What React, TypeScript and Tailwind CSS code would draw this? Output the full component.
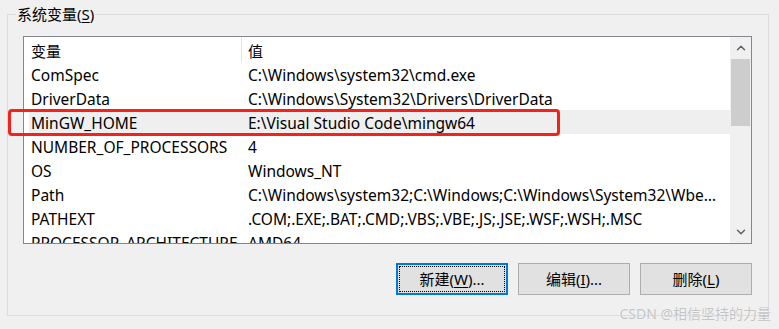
import { ChevronUp, ChevronDown } from "lucide-react"

const rows = [
  { name: "ComSpec", value: "C:\\Windows\\system32\\cmd.exe" },
  { name: "DriverData", value: "C:\\Windows\\System32\\Drivers\\DriverData" },
  { name: "MinGW_HOME", value: "E:\\Visual Studio Code\\mingw64", selected: true },
  { name: "NUMBER_OF_PROCESSORS", value: "4" },
  { name: "OS", value: "Windows_NT" },
  { name: "Path", value: "C:\\Windows\\system32;C:\\Windows;C:\\Windows\\System32\\Wbem;C:\\Windows\\System32\\WindowsPowerShell" },
  { name: "PATHEXT", value: ".COM;.EXE;.BAT;.CMD;.VBS;.VBE;.JS;.JSE;.WSF;.WSH;.MSC" },
  { name: "PROCESSOR_ARCHITECTURE", value: "AMD64" },
]

const Btn = ({ label, hot, rest, focused }: { label: string; hot: string; rest: string; focused?: boolean }) => (
  <button
    className={
      focused
        ? "w-[112px] h-[32px] bg-[#e1e1e1] border-2 border-[#0078d7] p-[1px] text-[15px] text-black"
        : "w-[112px] h-[32px] bg-[#e1e1e1] border border-[#adadad] text-[15px] text-black"
    }
  >
    <span className={focused ? "flex h-full w-full items-center justify-center border border-dotted border-black" : "flex h-full w-full items-center justify-center"}>
      {label}(<span className="underline underline-offset-2">{hot}</span>){rest}
    </span>
  </button>
)

const App = () => {
  return (
    <div
      className="relative w-[779px] h-[329px] bg-[#f0f0f0] overflow-hidden pt-[4px]"
      style={{ fontFamily: '"Noto Sans", "Noto Sans CJK SC", sans-serif' }}
    >
      <fieldset className="ml-[7px] w-[762px] h-[312px] border border-[#dcdcdc]">
        <legend className="ml-[8px] px-[1px] text-[15px] leading-[20px] text-black">
          系统变量(<span className="underline underline-offset-2">S</span>)
        </legend>

        <div className="pl-[15px] pt-[12px]">
          {/* list view */}
          <div className="flex w-[729px] h-[208px] border border-[#828790] bg-white">
            <div className="flex-1 overflow-hidden">
              <div className="flex h-[25px] items-center text-[15px] text-black">
                <div className="w-[217px] pl-[7px] pt-[4px]">变量</div>
                <div className="h-[25px] w-px bg-[#e5e5e5]" />
                <div className="pl-[6px] pt-[4px]">值</div>
              </div>
              {rows.map((r) => (
                <div key={r.name} className="flex h-[24px] pl-[5px] text-[15.5px] text-black whitespace-nowrap">
                  <div className={`flex h-full flex-1 items-center pt-[4px] ${r.selected ? "bg-[#efefef]" : ""}`}>
                    <div className="w-[219px] pl-[2px]">{r.name}</div>
                    <div className="w-[472px] overflow-hidden text-ellipsis">{r.value}</div>
                  </div>
                </div>
              ))}
            </div>
            {/* scrollbar */}
            <div className="flex w-[21px] flex-col bg-[#f0f0f0]">
              <div className="flex h-[22px] items-center justify-center text-[#606060]">
                <ChevronUp size={14} strokeWidth={2.5} />
              </div>
              <div className="mx-[1px] h-[67px] bg-[#cdcdcd]" />
              <div className="flex-1" />
              <div className="flex h-[22px] items-center justify-center text-[#606060]">
                <ChevronDown size={14} strokeWidth={2.5} />
              </div>
            </div>
          </div>

          <div className="flex w-[729px] justify-end gap-[10px] pt-[19px]">
            <Btn label="新建" hot="W" rest="..." focused />
            <Btn label="编辑" hot="I" rest="..." />
            <Btn label="删除" hot="L" rest="" />
          </div>
        </div>
      </fieldset>

      {/* red annotation box */}
      <div className="absolute left-[8px] top-[109px] w-[552px] h-[27px] rounded-[4px] border-[3px] border-[#f5221b]" />

      {/* watermark */}
      <div
        className="absolute right-[8px] bottom-[5px] text-[14px] text-[#c4c4c4]"
        style={{ textShadow: "0 0 1px #ffffff" }}
      >
        CSDN @相信坚持的力量
      </div>
    </div>
  )
}

export default App
